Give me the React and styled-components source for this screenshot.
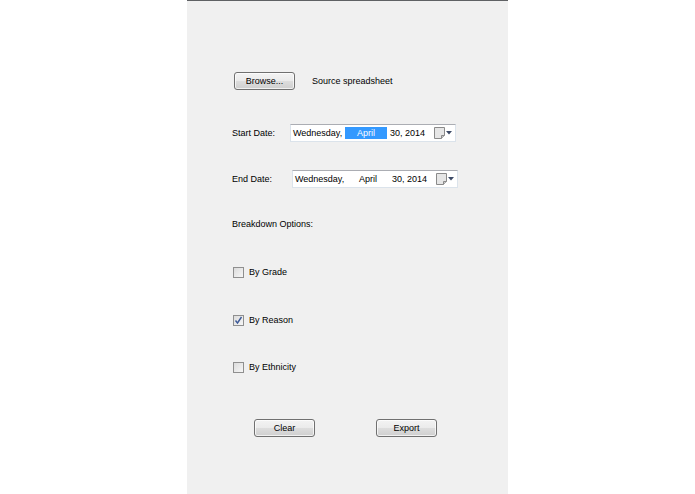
import React from 'react';
import styled, { createGlobalStyle } from 'styled-components';

const GlobalStyle = createGlobalStyle`
  html, body {
    margin: 0;
    padding: 0;
    background: #ffffff;
  }
  body {
    font-family: "Liberation Sans", Arial, sans-serif;
    font-size: 9px;
    color: #000000;
  }
`;

const Page = styled.div`
  display: flex;
  justify-content: center;
  width: 695px;
  height: 494px;
  overflow: hidden;
`;

const Form = styled.div`
  width: 321px;
  height: 494px;
  box-sizing: border-box;
  background: #f0f0f0;
  border-top: 1px solid #5f6164;
  padding-left: 45px;
  display: flex;
  flex-direction: column;
`;

const Row = styled.div`
  display: flex;
  align-items: center;
  height: ${p => p.$h || 17}px;
  margin-top: ${p => p.$top}px;
  padding-left: ${p => p.$indent || 0}px;
`;

const Label = styled.span`
  display: inline-block;
  width: ${p => (p.$w ? p.$w + 'px' : 'auto')};
  margin-left: ${p => p.$ml || 0}px;
  white-space: nowrap;
  line-height: 1;
`;

const Button = styled.button`
  width: 61px;
  height: 18px;
  padding: 0;
  margin-left: ${p => p.$ml || 0}px;
  font-family: "Liberation Sans", Arial, sans-serif;
  font-size: 9px;
  color: #000;
  border: 1px solid #707070;
  border-radius: 3px;
  background: linear-gradient(#f3f3f3 0%, #ebebeb 48%, #dddddd 52%, #cfcfcf 100%);
  box-shadow: inset 0 0 0 1px rgba(255, 255, 255, 0.7);
`;

const Picker = styled.div`
  display: flex;
  align-items: center;
  box-sizing: border-box;
  width: 166px;
  height: 18px;
  background: #ffffff;
  border: 1px solid #dbe3eb;
  border-top-color: #abadb3;
  padding-left: 2px;
  white-space: nowrap;
`;

const Field = styled.span`
  display: inline-block;
  width: ${p => p.$w}px;
  height: 12px;
  line-height: 12px;
  text-align: ${p => p.$align || 'left'};
  background: ${p => (p.$selected ? '#3399ff' : 'transparent')};
  color: ${p => (p.$selected ? '#ffffff' : '#000000')};
`;

const DropButton = styled.span`
  margin-left: auto;
  margin-right: 3px;
  display: flex;
  align-items: center;
  gap: 1px;
`;

const CheckBox = styled.span`
  display: inline-flex;
  align-items: center;
  justify-content: center;
  box-sizing: border-box;
  width: 11px;
  height: 11px;
  border: 1px solid #8f8f8f;
  background: linear-gradient(135deg, #dcdcdc, #f6f6f6);
  margin-left: 1px;
  margin-right: 5px;
`;

const Buttons = styled.div`
  display: flex;
  margin-top: ${p => p.$top}px;
  padding-left: 22px;
`;

function CalendarIcon() {
  return (
    <DropButton>
      <svg width="11" height="12" viewBox="0 0 11 12">
        <path d="M0.5 0.5 H10.5 V8.5 L7.5 11.5 H0.5 Z" fill="#e6e6e6" stroke="#8a8a8a" />
        <path d="M10.5 8.5 H7.5 V11.5" fill="#c8c8c8" stroke="#8a8a8a" />
      </svg>
      <svg width="6" height="4" viewBox="0 0 6 4">
        <path d="M0 0 H6 L3 3.5 Z" fill="#3c4a66" />
      </svg>
    </DropButton>
  );
}

function DatePicker({ selected }) {
  return (
    <Picker>
      <Field $w={52}>Wednesday,</Field>
      <Field $w={42} $align="center" $selected={selected}>April</Field>
      <Field $w={40} style={{ paddingLeft: 3 }}>30, 2014</Field>
      <CalendarIcon />
    </Picker>
  );
}

function Check({ checked, label, top }) {
  return (
    <Row $top={top} $h={11}>
      <CheckBox>
        {checked && (
          <svg width="9" height="9" viewBox="0 0 9 9">
            <path d="M1.5 4.5 L3.5 7 L7.5 1" fill="none" stroke="#3d5a98" strokeWidth="1.4" />
          </svg>
        )}
      </CheckBox>
      <Label>{label}</Label>
    </Row>
  );
}

export default function App() {
  return (
    <>
      <GlobalStyle />
      <Page>
        <Form>
          <Row $top={71} $h={18} $indent={2}>
            <Button>Browse...</Button>
            <Label $ml={17}>Source spreadsheet</Label>
          </Row>

          <Row $top={34} $h={18}>
            <Label $w={58}>Start Date:</Label>
            <DatePicker selected />
          </Row>

          <Row $top={28} $h={18}>
            <Label $w={60}>End Date:</Label>
            <DatePicker />
          </Row>

          <Row $top={27} $h={18}>
            <Label>Breakdown Options:</Label>
          </Row>

          <Check top={34} label="By Grade" />
          <Check top={37} checked label="By Reason" />
          <Check top={36} label="By Ethnicity" />

          <Buttons $top={46}>
            <Button>Clear</Button>
            <Button $ml={61}>Export</Button>
          </Buttons>
        </Form>
      </Page>
    </>
  );
}
